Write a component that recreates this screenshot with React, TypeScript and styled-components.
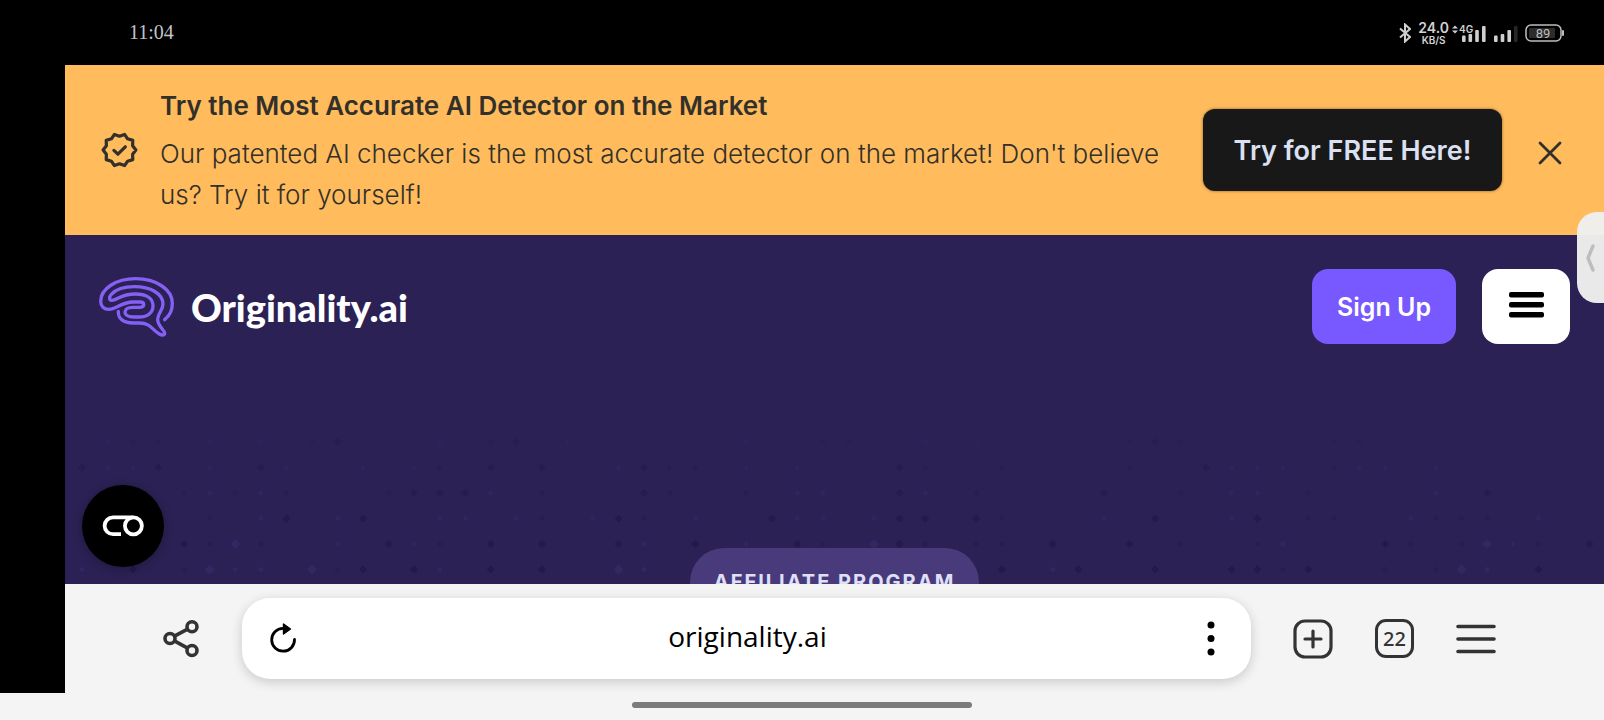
import React from "react";
import styled, { createGlobalStyle, css } from "styled-components";

const GlobalStyle = createGlobalStyle`
  *, *::before, *::after { box-sizing: border-box; }
  body { margin: 0; background: #f4f4f4; font-family: Inter, "Liberation Sans", sans-serif; }
  button, input { font-family: inherit; margin: 0; }
  h2, p { margin: 0; }
`;

const Screen = styled.div`
  display: flex;
  flex-direction: column;
  height: 100vh;
  overflow: hidden;
`;

/* Phone status bar */
const StatusBar = styled.div`
  flex: none;
  height: 65px;
  padding: 0 40px 0 129px;
  background: #000;
  color: #c4c4c4;
  display: flex;
  align-items: center;
  justify-content: space-between;
`;

const Clock = styled.time`
  font: 20px "Liberation Serif", serif;
`;

const StatusIcons = styled.div`
  display: flex;
  align-items: center;
  gap: 7px;
`;

const NetSpeed = styled.div`
  display: flex;
  flex-direction: column;
  align-items: center;
  font-weight: 600;
  color: #d2d2d2;
`;

const SpeedValue = styled.span`
  font-size: 14px;
  line-height: 14px;
`;

const SpeedUnit = styled.span`
  font-size: 10px;
  line-height: 10px;
`;

const Signals = styled.svg`
  margin-left: -4px;
`;

const Body = styled.div`
  flex: 1;
  min-height: 0;
  display: flex;
  border-left: 65px solid #000;
`;

const Page = styled.div`
  flex: 1;
  min-width: 0;
  position: relative;
  display: flex;
  flex-direction: column;
`;

/* Promotional banner */
const Banner = styled.section`
  flex: none;
  display: flex;
  align-items: center;
  padding: 20px 42px 20px 36px;
  background: #ffbb5c;
  color: #32302a;
`;

const BannerText = styled.div`
  flex: 1;
  margin: 0 24px 0 22px;
`;

const BannerTitle = styled.h2`
  font-size: 26px;
  line-height: 41px;
  font-weight: 600;
  margin-bottom: 7px;
`;

const BannerCopy = styled.p`
  font-size: 26px;
  line-height: 41px;
  font-weight: 300;
`;

const PlainButton = styled.button`
  display: flex;
  align-items: center;
  justify-content: center;
  padding: 0;
  border: 0;
  background: none;
  color: inherit;
  cursor: pointer;
`;

const CloseButton = styled(PlainButton)`
  padding-top: 6px;
`;

const CtaButton = styled(PlainButton)`
  width: 299px;
  height: 82px;
  margin-right: 36px;
  border-radius: 12px;
  background: #181818;
  color: #dbe0f2;
  font-size: 27px;
  font-weight: 600;
  box-shadow: 0 0 3px rgba(60, 40, 10, 0.6);
`;

/* Hero */
const Hero = styled.main`
  flex: 1;
  min-height: 0;
  position: relative;
  overflow: hidden;
  display: flex;
  flex-direction: column;
  align-items: center;
  background: #2b2154;
`;

const DotField = styled.svg`
  position: absolute;
  inset: 0;
`;

const SiteHeader = styled.header`
  flex: none;
  align-self: stretch;
  display: flex;
  align-items: center;
  padding: 34px 34px 0 33px;
  position: relative;
`;

const Brand = styled.a`
  display: flex;
  align-items: center;
  gap: 16px;
  margin-right: auto;
  color: #fff;
  text-decoration: none;
  font: 900 38px/46px Lato, Inter, sans-serif;
`;

const HeaderButton = styled(PlainButton)<{ $primary?: boolean }>`
  height: 75px;
  width: 88px;
  border-radius: 16px;
  background: #fff;
  color: #000;
  ${(p) =>
    p.$primary &&
    css`
      width: 144px;
      margin-right: 26px;
      background: #7858ff;
      color: #fff;
      font-size: 25px;
      font-weight: 600;
    `}
`;

const Eyebrow = styled.p`
  flex: none;
  position: relative;
  margin-top: 204px;
  padding: 20px 24px;
  border-radius: 34px;
  background: #483a7b;
  color: #dfe0f8;
  font-size: 20px;
  line-height: 28px;
  font-weight: 700;
  letter-spacing: 2px;
  white-space: nowrap;
`;

const CookieButton = styled(PlainButton)`
  position: absolute;
  left: 17px;
  bottom: 17px;
  width: 82px;
  height: 82px;
  border-radius: 50%;
  background: #000;
  box-shadow: 0 2px 10px rgba(0, 0, 0, 0.25);
`;

const EdgeHandle = styled(PlainButton)`
  position: absolute;
  right: 0;
  top: 147px;
  width: 27px;
  height: 91px;
  border-radius: 20px 0 0 20px;
  background: rgba(239, 240, 240, 0.97);
`;

/* Browser controls */
const Toolbar = styled.nav`
  flex: none;
  display: flex;
  align-items: center;
  gap: 42px;
  height: 109px;
  padding: 0 108px 0 97px;
  background: #f4f4f4;
  color: #333;
`;

const AddressBar = styled.form`
  flex: 1;
  min-width: 0;
  height: 81px;
  padding: 0 36px 0 26px;
  display: flex;
  align-items: center;
  border-radius: 28px;
  background: #fff;
  color: #000;
  box-shadow: 0 3px 12px rgba(0, 0, 0, 0.18);
`;

const AddressInput = styled.input`
  flex: 1;
  min-width: 0;
  padding: 0 10px 6px 0;
  border: 0;
  outline: 0;
  background: none;
  color: #000;
  text-align: center;
  font: 28px "Open Sans", "Noto Sans", sans-serif;
`;

const TabsButton = styled(PlainButton)`
  width: 39px;
  height: 39px;
  border: 3px solid #333;
  border-radius: 11px;
  font: 500 20px "Noto Sans", sans-serif;
`;

const GestureArea = styled.div`
  flex: none;
  height: 27px;
  display: flex;
  align-items: center;
  justify-content: center;
  padding-bottom: 3px;
`;

const GestureBar = styled.div`
  width: 340px;
  height: 6px;
  border-radius: 3px;
  background: #7b7b7b;
`;

// Each character is one diamond: D/d dark, L/l light, "." none.
const DOT_ROWS = [
  ".ldd.l.l.dD...l.dD.l......l..dd..l.l.....dDd.....dd",
  "DllD.l.Dl..l.ld.D.D..lDdd.l.l...Dd..d....d..Dlll.dll.l",
  "....dldld...dDDDl.d...Dd..d.ll..Dl.d....D..d.ll.d....l.D",
  ".....d.lD.lD..ll.ld.lDd.l..Dll.lDD.Dd...l.D..lD.dd..lddd.l",
  "....DdLd..l.Dld.D.D..Dl.D.l.Dd.LDd.dd.D..D.d..dl...Dd.dLld.D",
  "l.D.dLll.LdD.Dl.D.D..Ll......l......D.lD..D..DDdD..d.dLl.D",
];
const DOT_STYLE: Record<string, { r: number; fill: string; o: number }> = {
  D: { r: 4, fill: "#17113a", o: 0.42 },
  d: { r: 3, fill: "#1b1440", o: 0.25 },
  L: { r: 5, fill: "#4a3d8c", o: 0.28 },
  l: { r: 3, fill: "#4a3d8c", o: 0.25 },
};

function Dots() {
  return (
    <DotField width="100%" height="100%" aria-hidden="true">
      {DOT_ROWS.flatMap((row, j) =>
        Array.from({ length: 120 }, (_, k) => {
          const s = DOT_STYLE[row[k % 60] ?? "."];
          if (!s) return null;
          const x = 17 + k * 25.55;
          const y = 207 + j * 25.5;
          return (
            <path
              key={`${j}-${k}`}
              d={`M${x} ${y - s.r}L${x + s.r} ${y}L${x} ${y + s.r}L${x - s.r} ${y}Z`}
              fill={s.fill}
              opacity={s.o * (0.4 + j * 0.12)}
            />
          );
        })
      )}
    </DotField>
  );
}

function sealPath() {
  const n = 10;
  const pts = Array.from({ length: n * 2 }, (_, i) => {
    const a = (i * Math.PI) / n;
    const r = i % 2 ? 13.8 : 16.4;
    return `${(18 + r * Math.cos(a)).toFixed(2)} ${(18 + r * Math.sin(a)).toFixed(2)}`;
  });
  return `M${pts.join("L")}Z`;
}

const SealIcon = () => (
  <svg width="37" height="36" viewBox="0 0 36 36" fill="none" stroke="currentColor" strokeWidth="3.2" strokeLinejoin="round" strokeLinecap="round">
    <path d={sealPath()} />
    <path d="M12.4 18.4l4 3.8 7.4-7.4" />
  </svg>
);

const BrainLogo = () => (
  <svg width="77" height="61" viewBox="54 48 231 183" fill="none" stroke="#8560f5" strokeWidth="10" strokeLinecap="round" strokeLinejoin="round">
    <path d="M254 179C270 167 277 150 277 130C277 88 228 56 167 56C108 56 62 86 62 124C62 139 72 148 87 148C109 148 121 127 160 126H180C195 126 195 141 180 142H158C144 142 135 148 135 156C135 165 145 171 160 171H178C203 171 219 158 219 138C219 115 199 102 166 102C122 102 112 121 95 121C87 121 87 110 94 103C107 89 133 80 163 80C212 80 249 101 249 132C249 152 233 159 233 178C233 199 252 208 254 219C255 227 245 226 238 222C216 209 211 189 180 189H160C130 189 114 176 115 154" />
  </svg>
);

export default function App() {
  return (
    <Screen>
      <GlobalStyle />
      <StatusBar>
        <Clock>11:04</Clock>
        <StatusIcons>
          <svg width="12" height="20" viewBox="0 0 12 20" fill="none" stroke="#cfcfcf" strokeWidth="2">
            <path d="M1 5.500L11 14 6 18.500V1.500L11 6 1 14.500" />
          </svg>
          <NetSpeed>
            <SpeedValue>24.0</SpeedValue>
            <SpeedUnit>KB/S</SpeedUnit>
          </NetSpeed>
          <Signals width="66" height="20" viewBox="0 0 66 20" fill="#cfcfcf">
            <path d="M0 5.500L3 2.500 6 5.500ZM0 7.500H6L3 10.500Z" />
            <text x="7" y="10" fontSize="10" fontWeight="600">4G</text>
            <rect x="10" y="12.5" width="3.6" height="6.5" rx="1" />
            <rect x="16.5" y="11" width="3.6" height="8" rx="1" />
            <rect x="23.2" y="7" width="3.6" height="12" rx="1" />
            <rect x="30" y="3" width="3.6" height="16" rx="1" />
            <rect x="42" y="12.5" width="3.6" height="6.5" rx="1" />
            <rect x="48.7" y="11" width="3.6" height="8" rx="1" />
            <rect x="55.4" y="7" width="3.6" height="12" rx="1" />
            <rect x="62" y="3" width="3.6" height="16" rx="1" fill="#262626" />
          </Signals>
          <svg width="39" height="18" viewBox="0 0 39 18" fill="#bdbdbd">
            <rect x="1" y="1" width="35" height="16" rx="5" fill="none" stroke="#bdbdbd" strokeWidth="1.5" />
            <rect x="4" y="4" width="26" height="10" rx="1" fill="#2c2c2c" />
            <rect x="37" y="6" width="2" height="6" rx="1" />
            <text x="18" y="13.5" fontSize="13" fontFamily="Roboto" textAnchor="middle">89</text>
          </svg>
        </StatusIcons>
      </StatusBar>

      <Body>
        <Page>
          <Banner>
            <SealIcon />
            <BannerText>
              <BannerTitle>Try the Most Accurate AI Detector on the Market</BannerTitle>
              <BannerCopy>
                Our patented AI checker is the most accurate detector on the market! Don't believe us? Try it for yourself!
              </BannerCopy>
            </BannerText>
            <CtaButton type="button">Try for FREE Here!</CtaButton>
            <CloseButton type="button" aria-label="Close banner">
              <svg width="24" height="24" viewBox="0 0 24 24" fill="none" stroke="currentColor" strokeWidth="2.8" strokeLinecap="round">
                <path d="M2 2L22 22M22 2L2 22" />
              </svg>
            </CloseButton>
          </Banner>

          <Hero>
            <Dots />
            <SiteHeader>
              <Brand href="#">
                <BrainLogo />
                Originality.ai
              </Brand>
              <HeaderButton type="button" $primary>Sign Up</HeaderButton>
              <HeaderButton type="button" aria-label="Open menu">
                <svg width="35" height="30" viewBox="0 0 35 30">
                  <rect width="35" height="5.6" rx="2" />
                  <rect y="10" width="35" height="5.6" rx="2" />
                  <rect y="20" width="35" height="5.6" rx="2" />
                </svg>
              </HeaderButton>
            </SiteHeader>
            <Eyebrow>AFFILIATE PROGRAM</Eyebrow>
            <CookieButton type="button" aria-label="Cookie preferences">
              <svg width="42" height="22" viewBox="0 0 42 22" fill="none" stroke="#fff" strokeWidth="3.8">
                <path d="M19 19.200H11A8.400 8.400 0 0 1 11 2.400H31" />
                <circle cx="31.4" cy="10.8" r="8.5" />
              </svg>
            </CookieButton>
          </Hero>

          <Toolbar aria-label="Browser">
            <PlainButton type="button" aria-label="Share">
              <svg width="38" height="38" viewBox="0 0 38 38" fill="none" stroke="currentColor" strokeWidth="3.6">
                <circle cx="8" cy="18.5" r="5" />
                <circle cx="30" cy="6.8" r="5" />
                <circle cx="30" cy="30.5" r="5" />
                <path d="M12.400 16.100L25.600 9.200M12.400 20.900L25.600 28.100" />
              </svg>
            </PlainButton>
            <AddressBar>
              <PlainButton type="button" aria-label="Reload">
                <svg width="30" height="32" viewBox="0 0 30 32">
                  <path d="M26.500 16.500A11.400 11.400 0 1 1 15 5.400" fill="none" stroke="#000" strokeWidth="2.8" strokeLinecap="round" />
                  <path d="M15.500 1L22.500 6 15.500 11Z" stroke="#000" strokeWidth="1.4" strokeLinejoin="round" />
                </svg>
              </PlainButton>
              <AddressInput aria-label="Address" defaultValue="originality.ai" />
              <PlainButton type="button" aria-label="Page options">
                <svg width="8" height="36" viewBox="0 0 8 36">
                  <circle cx="4" cy="4" r="3.5" />
                  <circle cx="4" cy="17.5" r="3.5" />
                  <circle cx="4" cy="31" r="3.5" />
                </svg>
              </PlainButton>
            </AddressBar>
            <PlainButton type="button" aria-label="New tab">
              <svg width="40" height="40" viewBox="0 0 40 40" fill="none" stroke="currentColor" strokeWidth="3.2" strokeLinecap="round">
                <rect x="2" y="2" width="36" height="36" rx="10" />
                <path d="M20 12V28M12 20H28" />
              </svg>
            </PlainButton>
            <TabsButton type="button" aria-label="22 open tabs">22</TabsButton>
            <PlainButton type="button" aria-label="Browser menu">
              <svg width="40" height="30" viewBox="0 0 40 30" stroke="currentColor" strokeWidth="3.6" strokeLinecap="round">
                <path d="M2 2.500H38M2 15H38M2 27.500H38" />
              </svg>
            </PlainButton>
          </Toolbar>
          <EdgeHandle type="button" aria-label="Open side panel">
            <svg width="10" height="28" viewBox="0 0 10 28" fill="none" stroke="#bdbdbd" strokeWidth="3.4" strokeLinecap="round" strokeLinejoin="round">
              <path d="M7 2L2 14L7 26" />
            </svg>
          </EdgeHandle>
        </Page>
      </Body>
      <GestureArea>
        <GestureBar />
      </GestureArea>
    </Screen>
  );
}
